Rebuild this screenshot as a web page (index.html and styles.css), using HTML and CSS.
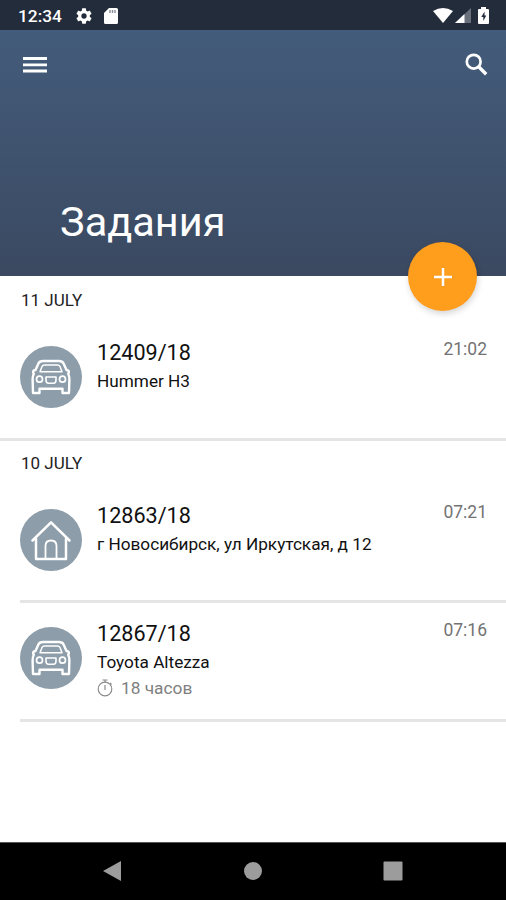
FILE: index.html
```html
<!DOCTYPE html>
<html lang="ru">
<head>
<meta charset="utf-8">
<title>Задания</title>
<link rel="stylesheet" href="styles.css">
</head>
<body>
<svg class="sprite" aria-hidden="true">
  <symbol id="car" viewBox="0 0 62 62">
    <g fill="none" stroke="#fff" stroke-linejoin="round" stroke-linecap="round">
      <path stroke-width="2.400" d="M23 15h16c2.300 0 3.700.6 4.600 2.600L46.500 24c2.400.5 2.600 1.300 2.300 2.600l-.6 1.200c.9 1.800 1.200 3.600 1.200 5.800L49 47h-6.500v-4.200h-23V47H13l-.4-13.400c0-2.200.3-4 1.200-5.800l-.6-1.200c-.3-1.300-.1-2.100 2.300-2.600L18.400 17.600c.9-2 2.300-2.600 4.600-2.600z"/>
      <path stroke-width="1.500" d="M24.500 19h13c1.400 0 2 .4 2.500 1.500l2 5.300H20l2-5.300c.5-1.100 1.100-1.500 2.500-1.500z"/>
      <path stroke-width="1.600" d="M26 31h10v3c0 2-.8 3.300-2.500 3.300h-5c-1.700 0-2.500-1.300-2.500-3.300z"/>
      <circle cx="19.500" cy="33.200" r="3" stroke-width="1.700"/>
      <circle cx="42.500" cy="33.200" r="3" stroke-width="1.700"/>
    </g>
  </symbol>
  <symbol id="house" viewBox="0 0 62 62">
    <g fill="none" stroke="#fff" stroke-linejoin="round" stroke-linecap="round">
      <path stroke-width="2.500" d="M12.500 31.500L31 13.300 49.500 31.500M16 30v20h30V30"/>
      <path stroke-width="1.800" d="M25.500 49.500V37c0-3.500 2-5.500 5.500-5.500s5.500 2 5.500 5.500v12.500"/>
    </g>
  </symbol>
</svg>
<div class="screen">
  <div class="status">
    <span class="clock">12:34</span>
    <svg class="gear" viewBox="2 2 20 20"><path fill="#fff" d="M19.140 12.940c.04-.3.060-.61.060-.94 0-.32-.02-.64-.07-.94l2.030-1.580c.18-.14.23-.41.120-.61l-1.920-3.320c-.12-.22-.37-.29-.59-.22l-2.390.96c-.5-.38-1.030-.7-1.620-.94l-.36-2.540c-.04-.24-.24-.41-.48-.41h-3.840c-.24 0-.43.17-.47.41l-.36 2.540c-.59.24-1.130.57-1.620.94l-2.390-.96c-.22-.08-.47 0-.59.220L2.740 8.870c-.12.21-.08.470.12.610l2.030 1.580c-.05.3-.09.630-.09.940s.02.640.07.940l-2.030 1.580c-.18.14-.23.410-.12.610l1.920 3.320c.12.220.37.290.59.220l2.390-.96c.5.380 1.030.7 1.620.940l.36 2.540c.05.240.24.410.48.410h3.840c.24 0 .44-.17.470-.41l.36-2.540c.59-.24 1.130-.56 1.620-.94l2.390.96c.22.080.47 0 .59-.22l1.920-3.320c.12-.22.070-.47-.12-.61l-2.010-1.580zM12 15.300a3.300 3.300 0 1 1 0-6.600 3.300 3.300 0 0 1 0 6.600z"/></svg>
    <svg class="sdcard" viewBox="0 0 14 16"><path fill="#fff" d="M5 0h7.500Q14 0 14 1.500v13q0 1.500-1.500 1.500h-11Q0 16 0 14.500V5z"/><path stroke="#858b95" stroke-width="1.400" d="M6 2v3M8.500 2v3M11 2v3"/></svg>
    <svg class="signals" viewBox="0 0 58 18">
      <path fill="#fff" d="M0 4Q10-2 20 4L10 16z"/>
      <path fill="#69707c" d="M38 1v15H22z"/><path fill="#fff" d="M31.500 7v9H22z"/>
      <path fill="#fff" d="M48 0h5v2h2q1 0 1 1v13q0 1-1 1h-9q-1 0-1-1V3q0-1 1-1h2z"/><path fill="#232c3a" d="M51.500 4.500L48.300 10h2v4l3-5.500h-1.800z"/>
    </svg>
  </div>
  <header class="header">
    <div class="toolbar">
      <svg class="menu" viewBox="0 0 24 17"><path stroke="#fff" stroke-width="2.800" d="M0 2.500h24M0 8.800h24M0 15h24"/></svg>
      <svg class="search" viewBox="0 0 23 23"><g fill="none" stroke="#fff"><circle cx="8.700" cy="8.700" r="6.900" stroke-width="2.700"/><path stroke-width="3.400" d="M13.700 13.700l7.500 7.500"/></g></svg>
    </div>
    <h1>Задания</h1>
    <button class="fab" aria-label="+"><svg viewBox="0 0 18 18"><path stroke="#fff" stroke-width="2.500" d="M9 0v18M0 9h18"/></svg></button>
  </header>
  <main>
    <section class="day first">
      <h2>11 JULY</h2>
      <article class="task">
        <div class="avatar"><svg><use href="#car"/></svg></div>
        <div class="info"><div class="number">12409/18</div><div class="subject">Hummer H3</div></div>
        <time>21:02</time>
      </article>
    </section>
    <section class="day">
      <h2>10 JULY</h2>
      <article class="task lined">
        <div class="avatar"><svg><use href="#house"/></svg></div>
        <div class="info"><div class="number">12863/18</div><div class="subject">г Новосибирск, ул Иркутская, д 12</div></div>
        <time>07:21</time>
      </article>
      <article class="task lined">
        <div class="avatar"><svg><use href="#car"/></svg></div>
        <div class="info"><div class="number">12867/18</div><div class="subject">Toyota Altezza</div>
          <div class="duration"><svg viewBox="0 0 16 18"><g fill="none" stroke="#8c8c8c" stroke-width="1.200"><circle cx="8" cy="10" r="6.800"/><path d="M5.500 1h5M8 1v2.500M13 4l1.500 1.500M8 6v5"/></g></svg><span>18 часов</span></div>
        </div>
        <time>07:16</time>
      </article>
    </section>
  </main>
  <nav class="navbar">
    <svg viewBox="0 0 20 20"><path fill="#9c9c9c" d="M0 10L18 0v20z"/></svg>
    <svg viewBox="0 0 20 20"><circle cx="10" cy="10" r="9" fill="#9c9c9c"/></svg>
    <svg viewBox="0 0 20 20"><rect x=".5" y=".5" width="19" height="19" rx="1" fill="#9c9c9c"/></svg>
  </nav>
</div>
</body>
</html>
```
FILE: styles.css
```css
* { box-sizing: border-box; }
body { margin: 0; font-family: Roboto, "Liberation Sans", sans-serif; color: #111; }
svg { display: block; flex: none; }
.sprite { position: absolute; width: 0; height: 0; }
.screen { width: 506px; height: 900px; display: flex; flex-direction: column; background: #fff; overflow: hidden; }
.status { height: 30px; background: #232c3a; display: flex; align-items: center; padding: 2px 15px 0 18px; color: #fff; }
.clock { width: 58px; font-size: 17.300px; font-weight: 500; line-height: 28px; }
.gear { width: 16px; height: 16px; }
.sdcard { width: 14px; height: 16px; margin-left: 12px; }
.signals { width: 58px; height: 18px; margin-left: auto; }
.header { position: relative; height: 246px; background: linear-gradient(#435c7b, #3b4961); }
.toolbar { display: flex; justify-content: space-between; align-items: center; height: 68px; padding: 0 18px 0 23px; }
.menu { width: 24px; height: 17px; }
.search { width: 23px; height: 23px; }
h1 { margin: 99px 0 0 60px; font-size: 41.500px; line-height: 50px; font-weight: 400; color: #fff; }
.fab { position: absolute; right: 29px; bottom: -35px; width: 69px; height: 69px; padding: 0; border: 0; border-radius: 50%; background: #ff9d1c; display: grid; place-items: center; box-shadow: 1px 3px 6px rgba(0, 0, 0, .16); }
.fab svg { width: 18px; height: 18px; }
main { flex: 1; }
.first { padding-top: 2px; border-bottom: 3px solid #e5e5e5; }
h2 { margin: 0; height: 44px; padding-left: 21px; font-size: 17px; line-height: 45px; font-weight: 400; color: #222; }
.task { height: 116px; display: flex; margin-left: 20px; padding: 16px 19px 0 0; }
.lined { height: 118px; border-bottom: 3px solid #e5e5e5; }
.lined + .lined { height: 119px; }
.avatar { width: 62px; height: 62px; margin-top: 8px; border-radius: 50%; background: #8d9da9; }
.avatar svg { width: 62px; height: 62px; }
.info { flex: 1; margin-left: 15px; white-space: nowrap; }
.number { padding-top: 1px; font-size: 21.600px; line-height: 28px; }
.subject { font-size: 17.200px; line-height: 28px; }
.duration { display: flex; align-items: center; gap: 8px; height: 23px; font-size: 17.300px; color: #808080; }
.duration svg { width: 16px; height: 18px; }
time { font-size: 17.500px; line-height: 22px; color: #737373; }
.navbar { height: 58px; background: #000; border-top: 1px solid #555; display: flex; justify-content: space-between; align-items: center; padding: 0 103px 2px; }
.navbar svg { width: 20px; height: 20px; }
```
